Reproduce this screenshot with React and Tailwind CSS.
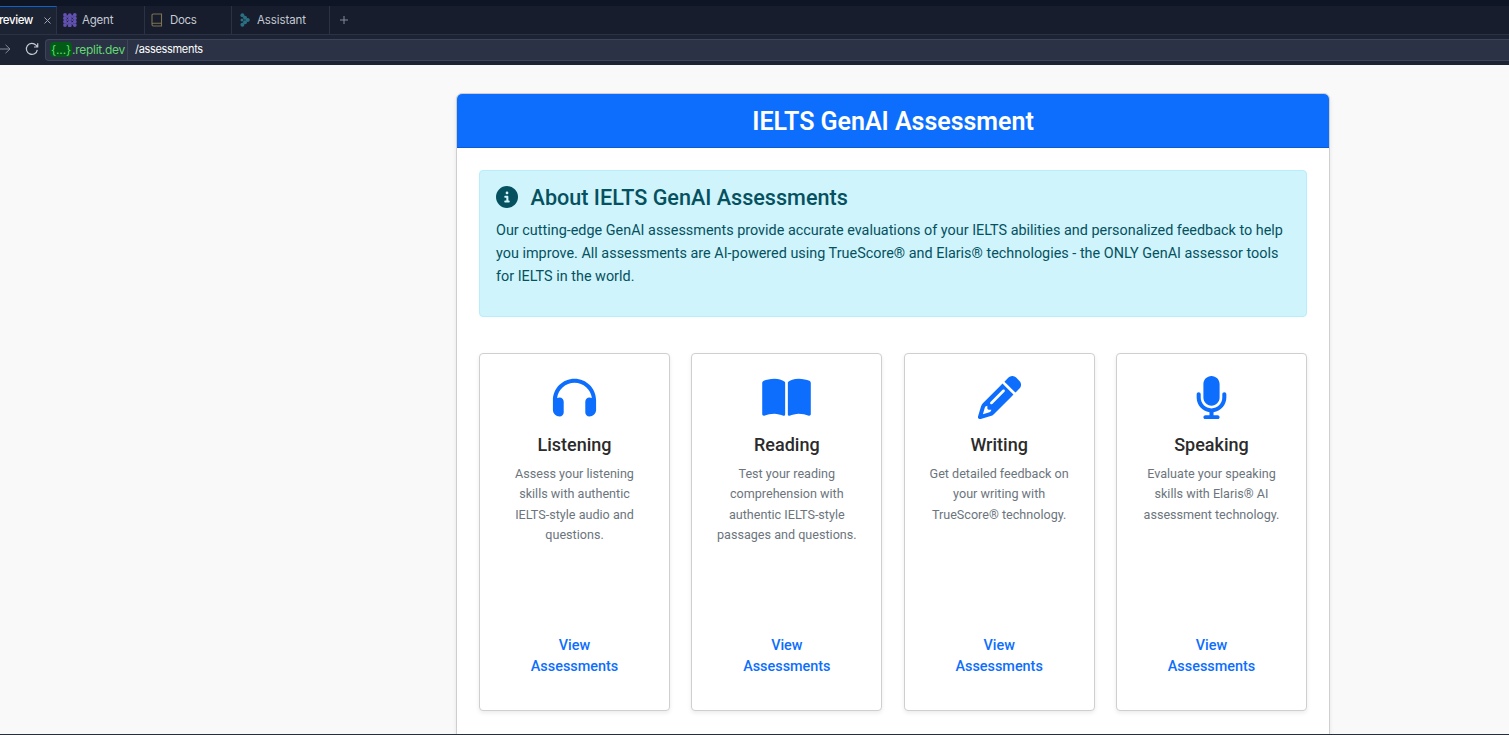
import React from "react";
import { FaHeadphones, FaBookOpen, FaPencil, FaMicrophone, FaCircleInfo } from "react-icons/fa6";

const skills = [
  { title: "Listening", Icon: FaHeadphones, lines: ["Assess your listening", "skills with authentic", "IELTS-style audio and", "questions."] },
  { title: "Reading", Icon: FaBookOpen, lines: ["Test your reading", "comprehension with", "authentic IELTS-style", "passages and questions."] },
  { title: "Writing", Icon: FaPencil, lines: ["Get detailed feedback on", "your writing with", "TrueScore® technology."] },
  { title: "Speaking", Icon: FaMicrophone, lines: ["Evaluate your speaking", "skills with Elaris® AI", "assessment technology."] },
];

function AgentIcon() {
  const xs = [2, 6.8, 11.8];
  const rows = [1.9, 5.2, 8.7, 12.1];
  return (
    <svg className="h-3.5 w-3.5 shrink-0" viewBox="0 0 14 14" fill="#6352b3">
      {rows.map((y, r) =>
        xs.map((x, c) => (
          <circle key={`${r}-${c}`} cx={x} cy={y + (c === 1 ? 0.3 : 0)} r="1.9" />
        ))
      )}
      <circle cx="4.4" cy="3.6" r="1.3" />
      <circle cx="9.3" cy="3.6" r="1.3" />
      <circle cx="4.4" cy="10.4" r="1.3" />
      <circle cx="9.3" cy="10.4" r="1.3" />
      <circle cx="4.4" cy="7" r="1.1" />
      <circle cx="9.3" cy="7" r="1.1" />
    </svg>
  );
}

function DocsIcon() {
  return (
    <svg className="h-3.5 w-3 shrink-0" viewBox="0 0 12 14" fill="none" stroke="#7d7350" strokeWidth="1.1">
      <path d="M1 11.5V2.2Q1 1 2.2 1H10.5V13H2.3Q1 13 1 11.6Q1 10.2 2.3 10.2H10.5" />
    </svg>
  );
}

function AssistantIcon() {
  return (
    <svg className="h-3.5 w-2.5 shrink-0" viewBox="0 0 10 14" fill="#2b6f82">
      <circle cx="2.4" cy="2.3" r="2" />
      <circle cx="2" cy="7" r="1.5" />
      <circle cx="2.4" cy="11.7" r="2" />
      <circle cx="5" cy="4.8" r="2" />
      <circle cx="5" cy="9.2" r="2" />
      <circle cx="7.7" cy="7" r="2.1" />
    </svg>
  );
}

function Browser() {
  return (
    <div className="h-[65px] shrink-0 bg-[#1c2333] font-['Inter',sans-serif] text-[11.5px] text-[#c5cad3]">
      <div className="h-1.5 bg-[#0e1525]" />
      <div className="flex h-[29px] border-b border-[#2b3245] bg-[#171d2d]">
        <div className="flex w-[57px] items-center border-t border-r border-t-[#0f62c8] border-r-[#2b3245] bg-[#1c2333] text-white">
          <span className="w-11 font-medium tracking-[-0.4px]"><span className="-ml-px">review</span></span>
          <svg className="h-[7px] w-[7px]" viewBox="0 0 7 7" stroke="#a0a6b3" strokeWidth="1"><path d="M.5 .5l6 6M6.5 .5l-6 6" /></svg>
        </div>
        <div className="flex w-[88px] items-center gap-[5px] border-r border-[#2b3245] pl-1.5"><AgentIcon /><span className="pt-px tracking-[-0.2px]">Agent</span></div>
        <div className="flex w-[87px] items-center gap-[7px] border-r border-[#2b3245] pl-1.5"><DocsIcon /><span className="pt-px tracking-[-0.3px]">Docs</span></div>
        <div className="flex w-[98px] items-center gap-[7px] border-r border-[#2b3245] pl-2"><AssistantIcon /><span className="pt-px tracking-[-0.1px]">Assistant</span></div>
        <div className="flex items-center pl-2.5">
          <svg className="h-2 w-2" viewBox="0 0 8 8" stroke="#858b98"><path d="M4 0v8M0 4h8" /></svg>
        </div>
      </div>
      <div className="flex h-[29px] items-center">
        <svg className="mb-px h-3 w-[11px]" viewBox="0 0 11 12" fill="none" stroke="#858b98"><path d="M0 6h10M5.5 1.8L10 6l-4.5 4.2" /></svg>
        <svg className="mb-px ml-3.5 h-3.5 w-3.5" viewBox="0 0 14 14" fill="none" stroke="#c5cad3" strokeWidth="1.2">
          <path d="M12.3 7.8A5.5 5.5 0 1 1 11 3.2L12.7 5M12.7 1.2V5H9" />
        </svg>
        <div className="ml-1.5 flex h-[22px] flex-1 items-center rounded-l border border-r-0 border-[#3c445c] bg-[#2b3245]">
          <div className="flex h-full w-[82px] items-center border-r border-[#3c445c] pl-1 text-[12px] tracking-[-0.3px] text-[#62d973]">
            <span className="rounded-sm bg-[#035c16] px-px leading-[15px] tracking-[-0.1px]">{"{...}"}</span>.replit.dev
          </div>
          <span className="pl-[7px] text-[11px] tracking-[-0.32px] text-white">/assessments</span>
        </div>
      </div>
    </div>
  );
}

export default function App() {
  return (
    <div className="flex h-[735px] w-full flex-col overflow-hidden border-b border-[#27303a] bg-[#f9f9f9] font-['Roboto',sans-serif]">
      <Browser />
      <main className="ml-[456px] mt-7 h-[700px] w-[874px] shrink-0 rounded-[6px] border border-[#cfcfcf] bg-white shadow-[0_2px_4px_rgba(0,0,0,0.08)]">
        <header className="flex h-[54px] items-center justify-center rounded-t-[5px] border-b border-[#0b5bd6] bg-[#0d6efd] pt-0.5">
          <h1 className="text-[25px] font-semibold tracking-[-0.03px] text-white">IELTS GenAI Assessment</h1>
        </header>
        <div className="px-[22px] pt-[22px]">
          <section className="h-[147px] rounded-[4px] border border-[#b6effb] bg-[#cff4fc] px-4 pt-3 text-[#055160]">
            <div className="flex h-[30px] items-center">
              <FaCircleInfo className="mr-[12.6px] mb-0.5 h-[22px] w-[22px]" />
              <h2 className="text-[21.6px] font-medium">About IELTS GenAI Assessments</h2>
            </div>
            <p className="mt-1.5 whitespace-nowrap text-[14.4px] leading-[23px] tracking-[0.005px]">
              Our cutting-edge GenAI assessments provide accurate evaluations of your IELTS abilities and personalized feedback to help<br />
              you improve. All assessments are AI-powered using TrueScore® and Elaris® technologies - the ONLY GenAI assessor tools<br />
              for IELTS in the world.
            </p>
          </section>
          <section className="mt-9 flex justify-between">
            {skills.map(({ title, Icon, lines }) => (
              <article key={title} className="flex h-[358px] w-[191px] flex-col items-center rounded-[4px] border border-[#cfcfcf] bg-white pt-[22px] text-center shadow-[0_2px_4px_rgba(0,0,0,0.08)]">
                <Icon className="h-[43.2px] w-[49px] text-[#0d6efd]" />
                <h3 className="mt-[14px] text-[18px] leading-[24px] font-medium text-[#2b2b2b]">{title}</h3>
                <p className="mt-[6.6px] whitespace-nowrap text-[12.6px] leading-[20.4px] text-[#6c757d]">
                  {lines.map((l) => <span key={l} className="block">{l}</span>)}
                </p>
                <a className="mt-auto mb-[33px] text-[14.4px] leading-[21px] font-medium text-[#0d6efd]">View<br />Assessments</a>
              </article>
            ))}
          </section>
        </div>
      </main>
    </div>
  );
}
